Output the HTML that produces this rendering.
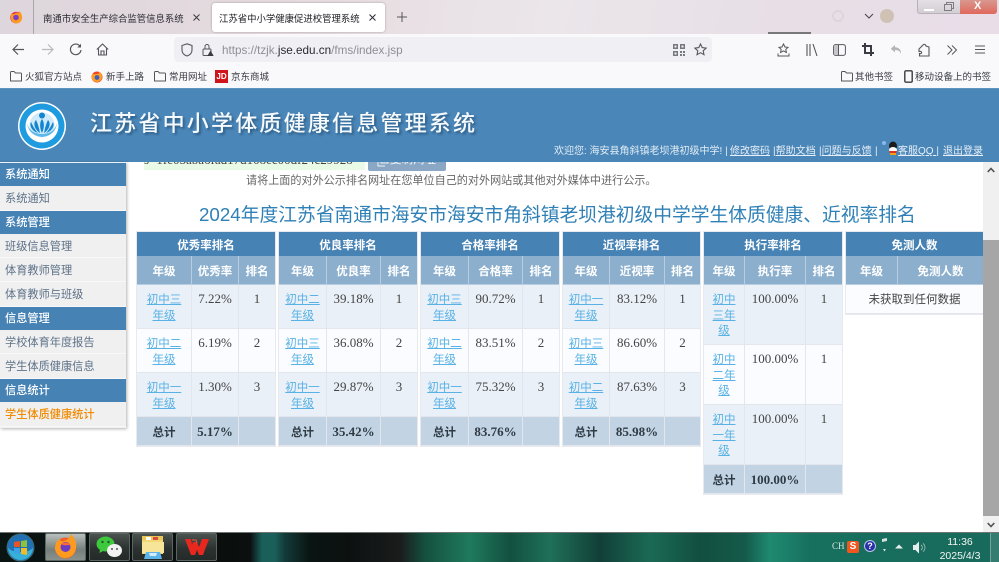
<!DOCTYPE html>
<html lang="zh"><head><meta charset="utf-8"><title>江苏省中小学健康促进校管理系统</title>
<style>
*{box-sizing:border-box}
html,body{margin:0;padding:0;width:999px;height:562px;overflow:hidden;background:#fff}
body{position:relative;font-family:"Liberation Sans","Noto Sans CJK SC",sans-serif;color:#333;filter:blur(.3px)}
.a{position:absolute;white-space:nowrap}
svg{position:absolute;overflow:visible}
a{color:inherit}
.bm{font-size:9.5px;color:#3b3b45;top:72px;line-height:12px}
.sh,.si{position:absolute;left:0;width:126px;padding-left:5px;font-size:11.2px}
.sh{background:#4682b4;color:#fff;font-weight:500;line-height:25px;height:23px;box-shadow:0 1px 0 #d8dde2;overflow:hidden}
.si{background:#f0f0f0;color:#5d7188;line-height:27px;height:23px;border-bottom:1px solid #f8f8f8;overflow:hidden}
table.t{position:absolute;top:232px;border-collapse:separate;border-spacing:0;table-layout:fixed;font-size:11.5px;text-align:center;outline:1px solid #e6e9ee}
.t td,.t th{padding:0;border-right:1px solid #e3e7ed;border-bottom:1px solid #e3e7ed;overflow:hidden}
.t td:last-child,.t th:last-child{border-right:0}
.t .h th{background:#4682b4;color:#fff;height:24px;font-weight:600;border:0;line-height:19px;padding-top:5px}
.t .s th{background:#8bafcd;color:#fff;height:29px;font-weight:600;border-color:#b9cde0;padding-top:4px;line-height:20px}
.t td{vertical-align:top;padding-top:6px;line-height:15.7px;color:#444;font-family:"Liberation Serif","Noto Sans CJK SC",serif;font-size:13px}
.t td a{display:block;margin:2px 5px 0;font-family:"Liberation Sans","Noto Sans CJK SC",sans-serif;font-size:11.5px;line-height:15.7px;color:#59b2e6;text-decoration:underline}
.t .o td{background:#e9f0f7}.t .e td{background:#fafcff}
.t .r td{height:44px}
.t .r5 td{height:60px}
.t .f td{background:#c2d4e3;height:29px;font-weight:700;color:#2f3a44;vertical-align:top;padding-top:2px;line-height:26px}
.t .f td:first-child{font-family:"Liberation Sans","Noto Sans CJK SC",sans-serif;font-size:11.5px;padding-top:4px;line-height:24px}
.tb{position:absolute;top:533px;height:28px;border:1px solid #5b6662;border-radius:2px;background:linear-gradient(#4a5250,#2c3230 55%,#242a28)}
</style></head><body>

<!-- tab strip -->
<div class="a" style="left:0;top:0;width:999px;height:34px;background:linear-gradient(100deg,#ddd6dc 0,#e6dbdf 30%,#ebe6ea 55%,#e7dee6 80%,#e9dde8 100%)"></div>
<svg style="left:9px;top:10px" width="14" height="14" viewBox="0 0 14 14"><circle cx="7" cy="7.500" r="5.800" fill="#e8384f"/><path d="M2 9A5.600 5.600 0 0 0 13 6.500C12.600 3.500 11.500 2 10 .8 10.600 2.500 10 3.500 9 3 7.500 2.500 6 3 5.500 4 4 4.500 3 4 2.600 3 1.500 5 1.500 7 2 9Z" fill="#ff9a20"/><circle cx="7" cy="7.500" r="2.800" fill="#7c3fc4"/></svg>
<div class="a" style="left:33px;top:0;width:1px;height:34px;background:#a9a4a9"></div>
<div class="a" style="left:43px;top:10px;font-size:9.4px;line-height:17px;color:#2a2a32">南通市安全生产综合监管信息系统</div>
<svg style="left:193px;top:14px" width="7" height="7" viewBox="0 0 7 7"><path d="M.5.500l6 6M6.500.500l-6 6" stroke="#3a3a42" stroke-width="1"/></svg>
<div class="a" style="left:212px;top:3px;width:173px;height:29px;background:#fff;border-radius:3px;box-shadow:0 0 2px rgba(0,0,0,.3)"></div>
<div class="a" style="left:219px;top:10px;font-size:9.4px;line-height:17px;color:#1c1b22">江苏省中小学健康促进校管理系统</div>
<svg style="left:369px;top:14px" width="7" height="7" viewBox="0 0 7 7"><path d="M.5.500l6 6M6.500.500l-6 6" stroke="#2a2a32" stroke-width="1"/></svg>
<svg style="left:397px;top:12px" width="10" height="10" viewBox="0 0 10 10"><path d="M5 0v10M0 5h10" stroke="#55555c" stroke-width="1"/></svg>
<!-- right of tab strip -->
<svg style="left:831px;top:8px" width="60" height="18" viewBox="0 0 60 18"><circle cx="7" cy="8" r="5" fill="none" stroke="#dcd6da" stroke-width="2"/><path d="M33 6l4 4 4-4" transform="translate(1 0)" fill="none" stroke="#44444c" stroke-width="1"/><circle cx="56" cy="8" r="7" fill="#cfc2b4"/></svg>
<div class="a" style="left:917px;top:0;width:80px;height:14px;border:1px solid #b7b2b7;border-top:0;border-radius:0 0 3px 3px;background:linear-gradient(#e4dfe4,#d3ced4)"></div>
<div class="a" style="left:960px;top:0;width:37px;height:14px;background:linear-gradient(#d9988f,#e0685c);border-radius:0 0 3px 0"></div>
<div class="a" style="left:974px;top:0;font-size:11px;line-height:13px;font-weight:700;color:#fff">X</div>
<div class="a" style="left:924px;top:9px;width:10px;height:2px;background:#fff"></div>
<svg style="left:944px;top:2px" width="10" height="9" viewBox="0 0 10 9"><path d="M.5 2.500h7v6h-7zM2.500 2.500v-2h7v6h-2" fill="none" stroke="#7d7a80"/></svg>

<!-- toolbar -->
<div class="a" style="left:0;top:34px;width:999px;height:54px;background:#f9f9fb"></div>
<div class="a" style="left:768px;top:32px;width:43px;height:2px;background:#77777a"></div>
<svg style="left:12px;top:43px" width="13" height="13" viewBox="0 0 13 13"><path d="M12 6.500H1.500M6 1.500l-5 5 5 5" fill="none" stroke="#55555c" stroke-width="1.200"/></svg>
<svg style="left:41px;top:43px" width="13" height="13" viewBox="0 0 13 13"><path d="M1 6.500h10.500M7 1.500l5 5-5 5" fill="none" stroke="#b9b9bf" stroke-width="1.200"/></svg>
<svg style="left:69px;top:43px" width="13" height="13" viewBox="0 0 13 13"><path d="M11 3.200A5.300 5.300 0 1 0 12 7" fill="none" stroke="#55555c" stroke-width="1.200"/><path d="M12 .8v3.700H8.300z" fill="#55555c"/></svg>
<svg style="left:96px;top:43px" width="13" height="13" viewBox="0 0 13 13"><path d="M.8 6.500L6.500 1l5.700 5.500M2.500 5.500v6.500h8v-6.500M5 12V8h3v4" fill="none" stroke="#55555c" stroke-width="1.100"/></svg>
<div class="a" style="left:174px;top:37px;width:538px;height:25px;background:#f0f0f4;border-radius:4px"></div>
<svg style="left:181px;top:43px" width="12" height="14" viewBox="0 0 12 14"><path d="M6 .8L11 2.500V7C11 10 9 12 6 13 3 12 1 10 1 7V2.500Z" fill="none" stroke="#55555c" stroke-width="1.100"/></svg>
<svg style="left:202px;top:43px" width="12" height="13" viewBox="0 0 12 13"><rect x="1" y="6" width="8" height="6.500" rx="1" fill="none" stroke="#55555c"/><path d="M3 6V3.500a2 2 0 0 1 4 0V6" fill="none" stroke="#55555c"/><path d="M8.500 7.500l3.200 5.500H5.300z" fill="#3a3a42"/></svg>
<div class="a" style="left:222px;top:43px;font-size:11.7px;line-height:16px;color:#8e8e95">https://tzjk.<span style="color:#2a2a32">jse.edu.cn</span>/fms/index.jsp</div>
<svg style="left:673px;top:44px" width="12" height="12" viewBox="0 0 12 12"><path d="M0 0h5v5H0zM7 0h5v5H7zM0 7h5v5H0zM7 7h2v2H7zM10 7h2v2h-2zM7 10h2v2H7zM10 10h2v2h-2z" fill="#77777e"/><path d="M1.500 1.500h2v2h-2zM8.500 1.500h2v2h-2zM1.500 8.500h2v2h-2z" fill="#f0f0f4"/></svg>
<svg style="left:694px;top:43px" width="13" height="13" viewBox="0 0 13 13"><path d="M6.500 1l1.700 3.600 3.900.5-2.900 2.700.8 3.900-3.500-2-3.500 2 .8-3.900L.9 5.100l3.900-.5z" fill="none" stroke="#55555c" stroke-width="1.100"/></svg>
<svg style="left:777px;top:43px" width="13" height="14" viewBox="0 0 13 14"><path d="M6.500 1l1.500 3 3 .4-2.200 2 .6 3-2.900-1.500-2.900 1.500.6-3-2.200-2 3-.4z" fill="none" stroke="#55555c"/><path d="M1 10.500V13h11v-2.500" fill="none" stroke="#55555c"/></svg>
<svg style="left:806px;top:44px" width="12" height="12" viewBox="0 0 12 12"><path d="M1 0v12M4 0v12M7 0l4 12" fill="none" stroke="#55555c" stroke-width="1.100"/></svg>
<svg style="left:833px;top:44px" width="13" height="12" viewBox="0 0 13 12"><rect x=".6" y=".6" width="11.800" height="10.800" rx="2" fill="none" stroke="#55555c"/><rect x="1.200" y="1.200" width="4" height="9.600" fill="#c5c5ca"/><path d="M5.500 1v10" stroke="#55555c"/></svg>
<svg style="left:862px;top:43px" width="12" height="13" viewBox="0 0 12 13"><path d="M3 0v10h9M0 3h9v10" fill="none" stroke="#3a3a42" stroke-width="2"/></svg>
<svg style="left:890px;top:44px" width="12" height="12" viewBox="0 0 12 12"><path d="M5 1L.8 4.700 5 8.400V6c3 0 5 1 6 4 .3-4-2-6.500-6-6.700z" fill="#b4b4ba"/></svg>
<svg style="left:918px;top:43px" width="13" height="14" viewBox="0 0 13 14"><path d="M1 6l4-4c.5-1 2-1 2.500 0l.5 1 3 1v9H1.500V10.500c1.500.5 2.500-.5 2-1.500-.5-.8-1.500-.8-2.500-.5z" fill="none" stroke="#55555c" stroke-width="1.100"/></svg>
<svg style="left:947px;top:45px" width="10" height="10" viewBox="0 0 10 10"><path d="M.5.500L5 5 .5 9.500M5 .5L9.500 5 5 9.500" fill="none" stroke="#55555c"/></svg>
<svg style="left:975px;top:45px" width="10" height="9" viewBox="0 0 10 9"><path d="M0 1h10M0 4.500h10M0 8h10" stroke="#55555c" stroke-width="1"/></svg>

<!-- bookmarks -->
<svg style="left:10px;top:71px" width="12" height="11" viewBox="0 0 12 11"><path d="M.5 10V1.500Q.5.500 1.500.500H4L5.500 2h5q1 0 1 1v7z" fill="none" stroke="#55555c"/></svg>
<div class="a bm" style="left:25px">火狐官方站点</div>
<svg style="left:91px;top:71px" width="12" height="12" viewBox="0 0 12 12"><circle cx="6" cy="6" r="5.500" fill="#f0442d"/><path d="M1 8a5.300 5.300 0 0 0 10-3C10.500 3 9.500 1.500 8 .7 8.500 2.500 7 3 5 3 3.500 3.500 2 3 1.500 2.500.5 4 .6 6 1 8Z" fill="#ffa020"/><circle cx="6" cy="6.500" r="2.400" fill="#3f5ec4"/></svg>
<div class="a bm" style="left:106px">新手上路</div>
<svg style="left:154px;top:71px" width="12" height="11" viewBox="0 0 12 11"><path d="M.5 10V1.500Q.5.500 1.500.500H4L5.500 2h5q1 0 1 1v7z" fill="none" stroke="#55555c"/></svg>
<div class="a bm" style="left:169px">常用网址</div>
<div class="a" style="left:215px;top:70px;width:13px;height:13px;background:#d0141c;color:#fff;font-size:8px;font-weight:700;line-height:13px;text-align:center">JD</div>
<div class="a bm" style="left:231px">京东商城</div>
<svg style="left:841px;top:71px" width="12" height="11" viewBox="0 0 12 11"><path d="M.5 10V1.500Q.5.500 1.500.500H4L5.500 2h5q1 0 1 1v7z" fill="none" stroke="#55555c"/></svg>
<div class="a bm" style="left:855px;width:40px">其他书签</div>
<svg style="left:904px;top:70px" width="9" height="13" viewBox="0 0 9 13"><rect x=".8" y=".8" width="7.400" height="11.400" rx="1.200" fill="none" stroke="#3a3a42" stroke-width="1.400"/></svg>
<div class="a bm" style="left:915px">移动设备上的书签</div>

<!-- page header -->
<div class="a" style="left:0;top:88px;width:999px;height:74px;background:#4a86b8;border-top:1px solid #5f94c0"></div>
<svg style="left:17px;top:101px" width="50" height="50" viewBox="0 0 50 50"><circle cx="25" cy="25" r="24" fill="#fff"/><circle cx="25" cy="25" r="22.500" fill="#1f9be0"/><circle cx="25" cy="25" r="16.500" fill="#fff"/><circle cx="25" cy="24" r="12.500" fill="#cfeafa"/><path d="M10 22c1 9 7 13 15 14 8-1 14-5 15-14-2 8-8 11-15 11S12 30 10 22Z" fill="#5ab8ea"/><circle cx="25" cy="14.500" r="3" fill="#1585cf"/><path d="M25 18c-2.500 3-2.500 9 0 14 2.500-5 2.500-11 0-14ZM19 19c-3 3-2 9 4 13-1-5-2-9-4-13ZM31 19c3 3 2 9-4 13 1-5 2-9 4-13ZM14 21c-2 4 1 9 7 11-3-3-5-7-7-11ZM36 21c2 4-1 9-7 11 3-3 5-7 7-11Z" fill="#1585cf"/></svg>
<div class="a" style="left:90px;top:108px;font-size:22px;line-height:32px;letter-spacing:2.200px;color:#f6fafc;font-weight:500;text-shadow:2px 2px 2px #2f5f88">江苏省中小学体质健康信息管理系统</div>
<div class="a" style="left:554px;top:145px;font-size:10px;line-height:14px;color:#e3edf5">欢迎您: 海安县角斜镇老坝港初级中学! |</div>
<div class="a" style="left:730px;top:145px;font-size:10px;line-height:14px;color:#e8f0f7"><a href="#">修改密码</a></div>
<div class="a" style="left:773px;top:145px;font-size:10px;line-height:14px;color:#e8f0f7">|<a href="#">帮助文档</a></div>
<div class="a" style="left:819px;top:145px;font-size:10px;line-height:14px;color:#e8f0f7">|<a href="#">问题与反馈</a></div>
<div class="a" style="left:875px;top:145px;font-size:10px;line-height:14px;color:#e8f0f7">|<u> </u></div>
<svg style="left:881px;top:141px" width="17" height="14" viewBox="0 0 17 14"><circle cx="3" cy="2" r="2" fill="#88b8ee"/><ellipse cx="12" cy="5" rx="4" ry="4.500" fill="#1c1c1c"/><ellipse cx="12" cy="9" rx="4" ry="3" fill="#fff"/><path d="M8 10l8 0-1 2h-6z" fill="#e0301e"/><path d="M9 13h6" stroke="#f4a010" stroke-width="2"/></svg>
<div class="a" style="left:898px;top:145px;font-size:10px;line-height:14px;color:#e8f0f7"><a href="#">客服QQ </a>|</div>
<div class="a" style="left:943px;top:145px;font-size:10px;line-height:14px;color:#e8f0f7"><a href="#">退出登录</a></div>

<!-- content clip -->
<div class="a" style="left:0;top:162px;width:983px;height:370px;overflow:hidden;background:#fff">
  <div class="a" style="left:144px;top:-12px;height:20px;width:221px;background:#e9fbe6;font-family:'Liberation Serif',serif;font-size:13px;line-height:19px;color:#444">s=1fe05aba6fad17d108ec00df24c29928</div>
  <div class="a" style="left:368px;top:-12px;width:78px;height:21px;background:#8aa8c5;border-radius:2px;color:#eef3f8;font-size:11.500px;line-height:20px;padding-left:22px">复制网址</div>
  <svg style="left:377px;top:-4px" width="12" height="9" viewBox="0 0 12 9"><path d="M4 0v5h7V0M1 2v6h7" fill="none" stroke="#eef3f8"/></svg>
  <div class="a" style="left:246px;top:12px;font-size:11.100px;line-height:15px;color:#666">请将上面的对外公示排名网址在您单位自己的对外网站或其他对外媒体中进行公示。</div>
  <div class="a" style="left:199px;top:40px;font-size:18.760px;line-height:26px;color:#2f80b6">2024年度江苏省南通市海安市海安市角斜镇老坝港初级中学学生体质健康、近视率排名</div>
</div>

<!-- sidebar -->
<div class="a" style="left:0;top:162px;width:126px;height:266px;background:#f0f0f0;box-shadow:1px 1px 3px rgba(0,0,0,.3)"></div>
<div class="sh" style="top:163px">系统通知</div>
<div class="si" style="top:186px;height:25px">系统通知</div>
<div class="sh" style="top:211px">系统管理</div>
<div class="si" style="top:234px;height:24px">班级信息管理</div>
<div class="si" style="top:258px;height:24px">体育教师管理</div>
<div class="si" style="top:282px;height:25px">体育教师与班级</div>
<div class="sh" style="top:307px">信息管理</div>
<div class="si" style="top:330px;height:24px">学校体育年度报告</div>
<div class="si" style="top:354px;height:25px">学生体质健康信息</div>
<div class="sh" style="top:379px">信息统计</div>
<div class="si" style="top:402px;height:25px;color:#f08a00;font-weight:500">学生体质健康统计</div>

<!-- tables -->
<table class="t" style="left:137px;width:138px"><colgroup><col style="width:55px"><col style="width:47px"><col></colgroup>
<tr class="h"><th colspan="3">优秀率排名</th></tr><tr class="s"><th>年级</th><th>优秀率</th><th>排名</th></tr>
<tr class="r o"><td><a href="#">初中三年级</a></td><td>7.22%</td><td>1</td></tr>
<tr class="r e"><td><a href="#">初中二年级</a></td><td>6.19%</td><td>2</td></tr>
<tr class="r o"><td><a href="#">初中一年级</a></td><td>1.30%</td><td>3</td></tr>
<tr class="f"><td>总计</td><td>5.17%</td><td></td></tr></table>

<table class="t" style="left:279px;width:138px"><colgroup><col style="width:48px"><col style="width:54px"><col></colgroup>
<tr class="h"><th colspan="3">优良率排名</th></tr><tr class="s"><th>年级</th><th>优良率</th><th>排名</th></tr>
<tr class="r o"><td><a href="#">初中二年级</a></td><td>39.18%</td><td>1</td></tr>
<tr class="r e"><td><a href="#">初中三年级</a></td><td>36.08%</td><td>2</td></tr>
<tr class="r o"><td><a href="#">初中一年级</a></td><td>29.87%</td><td>3</td></tr>
<tr class="f"><td>总计</td><td>35.42%</td><td></td></tr></table>

<table class="t" style="left:421px;width:138px"><colgroup><col style="width:48px"><col style="width:54px"><col></colgroup>
<tr class="h"><th colspan="3">合格率排名</th></tr><tr class="s"><th>年级</th><th>合格率</th><th>排名</th></tr>
<tr class="r o"><td><a href="#">初中三年级</a></td><td>90.72%</td><td>1</td></tr>
<tr class="r e"><td><a href="#">初中二年级</a></td><td>83.51%</td><td>2</td></tr>
<tr class="r o"><td><a href="#">初中一年级</a></td><td>75.32%</td><td>3</td></tr>
<tr class="f"><td>总计</td><td>83.76%</td><td></td></tr></table>

<table class="t" style="left:563px;width:137px"><colgroup><col style="width:47px"><col style="width:55px"><col></colgroup>
<tr class="h"><th colspan="3">近视率排名</th></tr><tr class="s"><th>年级</th><th>近视率</th><th>排名</th></tr>
<tr class="r o"><td><a href="#">初中一年级</a></td><td>83.12%</td><td>1</td></tr>
<tr class="r e"><td><a href="#">初中三年级</a></td><td>86.60%</td><td>2</td></tr>
<tr class="r o"><td><a href="#">初中二年级</a></td><td>87.63%</td><td>3</td></tr>
<tr class="f"><td>总计</td><td>85.98%</td><td></td></tr></table>

<table class="t" style="left:704px;width:138px"><colgroup><col style="width:41px"><col style="width:61px"><col></colgroup>
<tr class="h"><th colspan="3">执行率排名</th></tr><tr class="s"><th>年级</th><th>执行率</th><th>排名</th></tr>
<tr class="r5 o"><td><a href="#">初中三年级</a></td><td>100.00%</td><td>1</td></tr>
<tr class="r5 e"><td><a href="#">初中二年级</a></td><td>100.00%</td><td>1</td></tr>
<tr class="r5 o"><td><a href="#">初中一年级</a></td><td>100.00%</td><td>1</td></tr>
<tr class="f"><td>总计</td><td>100.00%</td><td></td></tr></table>

<table class="t" style="left:846px;width:137px"><colgroup><col style="width:52px"><col></colgroup>
<tr class="h"><th colspan="2">免测人数</th></tr><tr class="s"><th>年级</th><th>免测人数</th></tr>
<tr class="e"><td colspan="2" style="height:29px;padding-top:8px;font-family:'Liberation Sans','Noto Sans CJK SC',sans-serif;font-size:11.500px">未获取到任何数据</td></tr></table>

<!-- scrollbar -->
<div class="a" style="left:983px;top:162px;width:16px;height:370px;background:#f0f0f0"></div>
<div class="a" style="left:983px;top:240px;width:16px;height:276px;background:#a6a6a6"></div>
<svg style="left:987px;top:167px" width="8" height="6" viewBox="0 0 8 6"><path d="M.7 5L4 1.500 7.300 5" fill="none" stroke="#505050" stroke-width="1.600"/></svg>
<svg style="left:987px;top:522px" width="8" height="6" viewBox="0 0 8 6"><path d="M.7 1L4 4.500 7.300 1" fill="none" stroke="#505050" stroke-width="1.600"/></svg>

<!-- taskbar -->
<div class="a" style="left:0;top:532px;width:999px;height:30px;background:linear-gradient(90deg,#0a1412 0,#0a0f0e 217px,#0b0f0f 250px,#1a5f5a 262px,#1a5f5a 275px,#123a38 285px,#0a1412 310px,#0c1110 350px,#1a1c1c 400px,#15503f 425px,#1f7a5c 470px,#135040 510px,#1f7058 550px,#123f38 600px,#1a6a55 650px,#124f40 700px,#145a4a 745px,#1f8a70 770px,#17705e 810px,#186a5c 999px);border-top:1px solid #6f7573"></div>
<svg style="left:6px;top:533px" width="29" height="29" viewBox="0 0 29 29"><circle cx="14.500" cy="14.500" r="13.500" fill="#2170b4" stroke="#3d6a70"/><path d="M2 14.500a12.500 12.500 0 0 0 25 0c-3 6-22 6-25 0Z" fill="#36b0d8"/><path d="M8 9l6-1v6H8z" fill="#e8542a"/><path d="M15 8l6-1v7h-6z" fill="#8fc23c"/><path d="M8 15h6v6l-6-1z" fill="#3aa0e8"/><path d="M15 15h6v7l-6-1z" fill="#f0bc2a"/></svg>
<div class="tb" style="left:45px;width:41px;background:linear-gradient(#b9bfbc,#767f7b 60%,#8a928e)"></div>
<div class="tb" style="left:89px;width:41px"></div>
<div class="tb" style="left:132px;width:41px"></div>
<div class="tb" style="left:176px;width:41px"></div>
<svg style="left:53px;top:534px" width="25" height="25" viewBox="0 0 25 25"><circle cx="12.500" cy="14" r="10.500" fill="#f0602a"/><path d="M2 15C2 8 5 6 7 5 7 7 9 8 11 7 15 6 17 3 18 0c3 3 6 8 5 14-1 7-6 10-11 10C7 24 3 20 2 15Z" fill="#ff9a20"/><circle cx="12.500" cy="13" r="5" fill="#6a3bc4"/><path d="M8 10c3-2 7-2 9 1-3 0-6 1-9-1Z" fill="#ff6b30"/></svg>
<svg style="left:96px;top:536px" width="27" height="23" viewBox="0 0 27 23"><ellipse cx="9.500" cy="8" rx="9" ry="7.500" fill="#3ec83e"/><path d="M4 13l-.5 4 4.500-2.500z" fill="#3ec83e"/><ellipse cx="18.500" cy="14.500" rx="7.500" ry="6.500" fill="#f2f2f2"/><circle cx="6.500" cy="6" r="1.200" fill="#1c5c1c"/><circle cx="12.500" cy="6" r="1.200" fill="#1c5c1c"/><circle cx="16" cy="13" r="1" fill="#555"/><circle cx="21" cy="13" r="1" fill="#555"/></svg>
<svg style="left:141px;top:535px" width="24" height="25" viewBox="0 0 24 25"><path d="M1 1h21v18H1z" fill="#f2d876"/><path d="M1 1h21v4H1z" fill="#e9c85a"/><path d="M5 2h5v3H5z" fill="#fff"/><path d="M12 2h5v3h-5z" fill="#e04a3a"/><path d="M1 7h22v11H1z" fill="#f7e69a"/><path d="M5 17h14l2 7H3z" fill="#5cb5e8"/><path d="M8 18h8l-1 3H9z" fill="#d6eefa"/></svg>
<svg style="left:184px;top:537px" width="26" height="20" viewBox="0 0 26 20"><path d="M1 2l6 16h4l2-5 2 5h4l6-16h-7l-3 8-2-5h-4l-1 3L7 2z" fill="#e8281e"/><path d="M8 3h4l1 3" fill="none" stroke="#f05a3a"/></svg>

<div class="a" style="left:832px;top:541px;font-family:'Liberation Serif',serif;font-size:9px;line-height:11px;color:#dce6e3">CH</div>
<div class="a" style="left:847px;top:541px;width:12px;height:12px;background:#f0561e;border-radius:2px;color:#fff;font-size:10px;line-height:12px;font-weight:700;text-align:center">S</div>
<div class="a" style="left:864px;top:540px;width:12px;height:12px;border-radius:50%;background:#2832a8;border:1px solid #b8c4e4;color:#fff;font-size:9px;line-height:10px;font-weight:700;text-align:center">?</div>
<svg style="left:880px;top:538px" width="8" height="14" viewBox="0 0 8 14"><path d="M2 1l5-1v3l-5 1zM3 11h3l-1.500 2.500z" fill="#d8e0dc"/></svg>
<svg style="left:895px;top:544px" width="8" height="5" viewBox="0 0 8 5"><path d="M0 4.500L4 .5l4 4z" fill="#e8eeec"/></svg>
<svg style="left:913px;top:541px" width="13" height="13" viewBox="0 0 13 13"><path d="M0 4h2.500L6 .5v12L2.500 9H0z" fill="#e8eeec"/><path d="M8 4a3 3 0 0 1 0 5M10 2.500a5 5 0 0 1 0 8" fill="none" stroke="#a8bcb6" stroke-width=".8"/></svg>
<div class="a" style="left:930px;top:535px;width:60px;text-align:center;font-size:10.500px;line-height:14px;color:#f2f6f5">11:36<br>2025/4/3</div>
<div class="a" style="left:990px;top:533px;width:9px;height:29px;background:rgba(255,255,255,.12);border-left:1px solid rgba(255,255,255,.3)"></div>
</body></html>
